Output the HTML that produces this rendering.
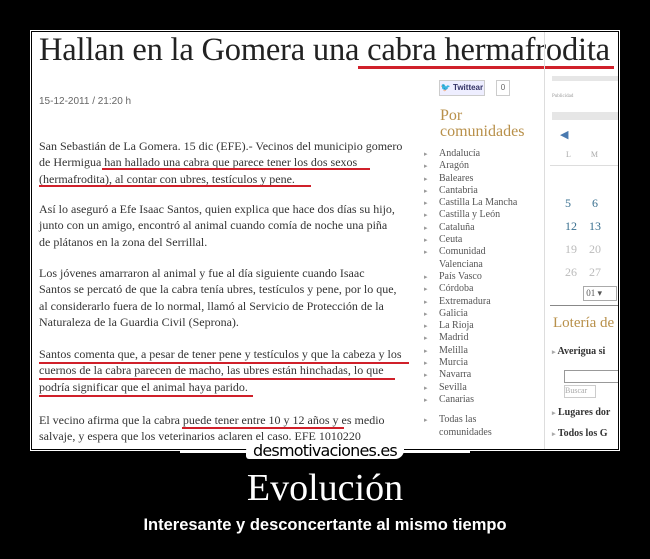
<!DOCTYPE html>
<html><head><meta charset="utf-8"><style>
body{margin:0;width:650px;height:559px;background:#000;position:relative;overflow:hidden;font-family:"Liberation Serif",serif}
.frame{position:absolute;left:30px;top:30px;width:588px;height:419px;border:1px solid #fff;background:#000}
.img{position:absolute;left:32px;top:32px;width:586px;height:417px;background:#fff;overflow:hidden}
.a{position:absolute;white-space:nowrap}
.t{font-size:32.5px;color:#222;left:7px;top:0px;letter-spacing:-0.2px}
.p{left:7px;font-size:12px;color:#333;line-height:16.3px}
.red{position:absolute;height:2px;background:#d0202a}
.side{left:407px;font-size:10px;color:#555;line-height:12.3px}
.side div:before{content:"▸";color:#999;font-size:7px;position:absolute;left:-15px}
.side div{position:relative}
</style></head><body>
<div class="frame"></div>
<div class="img">
<div class="a t">Hallan en la Gomera una cabra hermafrodita</div>
<div class="red" style="left:326px;top:34px;width:256px;height:3px"></div>
<div class="a" style="left:7px;top:64px;font-family:'Liberation Sans',sans-serif;font-size:10px;color:#666">15-12-2011 / 21:20 h</div>
<div class="a p" style="top:106px">San Sebastián de La Gomera. 15 dic (EFE).- Vecinos del municipio gomero<br>de Hermigua han hallado una cabra que parece tener los dos sexos<br>(hermafrodita), al contar con ubres, testículos y pene.</div>
<div class="red" style="left:70px;top:136px;width:268px"></div>
<div class="red" style="left:7px;top:153px;width:272px"></div>
<div class="a p" style="top:169px">Así lo aseguró a Efe Isaac Santos, quien explica que hace dos días su hijo,<br>junto con un amigo, encontró al animal cuando comía de noche una piña<br>de plátanos en la zona del Serrillal.</div>
<div class="a p" style="top:233px">Los jóvenes amarraron al animal y fue al día siguiente cuando Isaac<br>Santos se percató de que la cabra tenía ubres, testículos y pene, por lo que,<br>al considerarlo fuera de lo normal, llamó al Servicio de Protección de la<br>Naturaleza de la Guardia Civil (Seprona).</div>
<div class="a p" style="top:314px">Santos comenta que, a pesar de tener pene y testículos y que la cabeza y los<br>cuernos de la cabra parecen de macho, las ubres están hinchadas, lo que<br>podría significar que el animal haya parido.</div>
<div class="red" style="left:7px;top:330px;width:370px"></div>
<div class="red" style="left:7px;top:346px;width:356px"></div>
<div class="red" style="left:7px;top:363px;width:214px"></div>
<div class="a p" style="top:380px">El vecino afirma que la cabra puede tener entre 10 y 12 años y es medio<br>salvaje, y espera que los veterinarios aclaren el caso. EFE 1010220</div>
<div class="red" style="left:150px;top:395px;width:162px"></div>
<div class="a" style="left:407px;top:48px;width:44px;height:14px;border:1px solid #ccc;background:#eef;font:bold 8px 'Liberation Sans',sans-serif;color:#336;line-height:14px;text-align:center">🐦 Twittear</div>
<div class="a" style="left:464px;top:48px;width:12px;height:14px;border:1px solid #ccc;font:8px sans-serif;color:#666;line-height:14px;text-align:center">0</div>
<div class="a" style="left:408px;top:76px;font-size:16px;color:#b8904a;line-height:16px">Por<br>comunidades</div>
<div class="a side" style="top:116px"><div>Andalucía</div><div>Aragón</div><div>Baleares</div><div>Cantabria</div><div>Castilla La Mancha</div><div>Castilla y León</div><div>Cataluña</div><div>Ceuta</div><div>Comunidad<br>Valenciana</div><div>País Vasco</div><div>Córdoba</div><div>Extremadura</div><div>Galicia</div><div>La Rioja</div><div>Madrid</div><div>Melilla</div><div>Murcia</div><div>Navarra</div><div>Sevilla</div><div>Canarias</div><div style="margin-top:8px">Todas las<br>comunidades</div></div>
<div class="a" style="left:512px;top:0;width:1px;height:417px;background:#ddd"></div>
<div class="a" style="left:520px;top:44px;width:66px;height:5px;background:#e6e6e6"></div>
<div class="a" style="left:520px;top:62px;font-size:5px;color:#999">Publicidad</div>
<div class="a" style="left:520px;top:80px;width:66px;height:8px;background:#e6e6e6"></div>
<div class="a" style="left:528px;top:96px;color:#4a7ab0;font-size:11px">◀</div>
<div class="a" style="left:534px;top:118px;font-size:8px;color:#aaa">L&nbsp;&nbsp;&nbsp;&nbsp;&nbsp;&nbsp;&nbsp;&nbsp;&nbsp;&nbsp;M</div>
<div class="a" style="left:518px;top:133px;width:68px;height:1px;background:#ddd"></div>
<div class="a" style="left:533px;top:160px;font-size:12px;color:#3a7090;line-height:23px">5&nbsp;&nbsp;&nbsp;&nbsp;&nbsp;&nbsp;&nbsp;6<br>12&nbsp;&nbsp;&nbsp;&nbsp;13<br><span style="color:#bbb">19&nbsp;&nbsp;&nbsp;&nbsp;20<br>26&nbsp;&nbsp;&nbsp;&nbsp;27</span></div>
<div class="a" style="left:551px;top:254px;width:32px;height:13px;border:1px solid #aaa;font-size:9px;color:#555;line-height:13px">&nbsp;01 ▾</div>
<div class="a" style="left:518px;top:273px;width:68px;height:1px;background:#888"></div>
<div class="a" style="left:521px;top:283px;font-size:15px;color:#b8904a">Lotería de</div>
<div class="a" style="left:520px;top:314px;font-size:10px;color:#333;font-weight:bold"><span style="color:#aaa;font-size:7px">▸</span> Averigua si</div>
<div class="a" style="left:532px;top:338px;width:56px;height:11px;border:1px solid #999"></div>
<div class="a" style="left:532px;top:353px;width:30px;height:11px;border:1px solid #ccc;font-size:8px;color:#aaa">Buscar</div>
<div class="a" style="left:520px;top:375px;font-size:10px;color:#333;font-weight:bold"><span style="color:#aaa;font-size:7px">▸</span> Lugares dor</div>
<div class="a" style="left:520px;top:396px;font-size:10px;color:#333;font-weight:bold"><span style="color:#aaa;font-size:7px">▸</span> Todos los G</div>
</div>
<div style="position:absolute;left:180px;top:451px;width:290px;height:2px;background:#fff"></div>
<div style="position:absolute;left:246px;top:442px;width:158px;height:17px;background:#fff;border-radius:9px 3px 9px 3px;text-align:center;font:16px 'DejaVu Sans',sans-serif;color:#000;line-height:17px;letter-spacing:-0.8px">desmotivaciones.es</div>
<div style="position:absolute;left:0;width:650px;top:466px;text-align:center;color:#fff;font-size:38px">Evolución</div>
<div style="position:absolute;left:0;width:650px;top:516px;text-align:center;color:#fff;font:bold 16.5px 'Liberation Sans',sans-serif">Interesante y desconcertante al mismo tiempo</div>
</body></html>
